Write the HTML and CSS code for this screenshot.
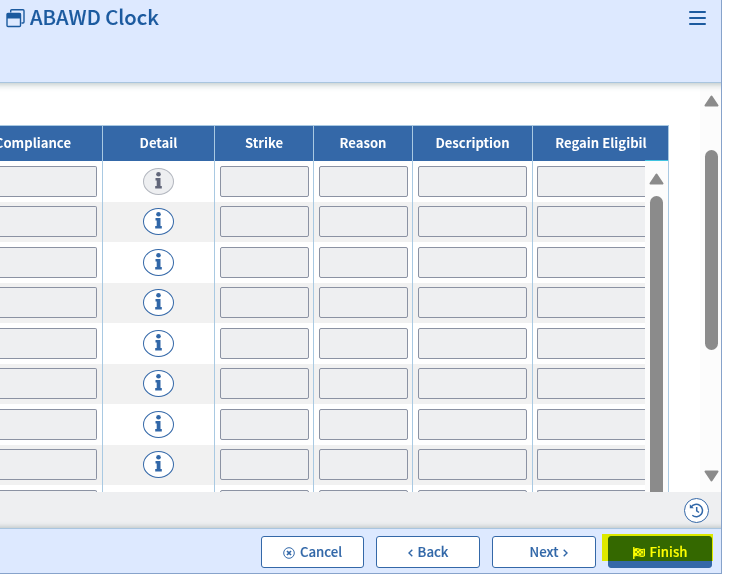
FILE: index.html
```html
<!DOCTYPE html>
<html lang="en">
<head>
    <meta charset="UTF-8">
    <meta name="viewport" content="width=device-width, initial-scale=1.0">
    <title>ABAWD Clock</title>
    <link rel="stylesheet" href="styles.css">
</head>
<body>
    <div class="window">
        <header class="page-header">
            <svg class="title-icon" width="19" height="19" viewBox="0 0 19 19">
                <path d="M4.700 3.500V1.700q0-1 1-1H17q1 0 1 1V13q0 1-1 1h-1.500" fill="none" stroke="#1b5a9f" stroke-width="1.400"/>
                <rect x="1" y="4.500" width="13.500" height="13" rx="1" fill="none" stroke="#1b5a9f" stroke-width="1.400"/>
                <path d="M1 4h13.500v5.500H1z" fill="#1b5a9f"/>
            </svg>
            <h1>ABAWD Clock</h1>
            <button class="menu-button" aria-label="Menu"><span></span><span></span><span></span></button>
        </header>

        <main class="content">
            <div class="table">
                <div class="row head">
                    <div class="cell first">Compliance</div>
                    <div class="cell">Detail</div>
                    <div class="cell">Strike</div>
                    <div class="cell">Reason</div>
                    <div class="cell">Description</div>
                    <div class="cell last">Regain Eligibil</div>
                </div>
                <div class="table-body">
                    <div class="rows" id="rows"></div>
                    <div class="scrollbar inner">
                        <svg class="arrow" width="15" height="12" viewBox="0 0 15 12"><path d="M7.500 1.500L13.500 10.500H1.500z"/></svg>
                        <div class="thumb"></div>
                    </div>
                </div>
            </div>
            <div class="scrollbar outer">
                <svg class="arrow" width="15" height="12" viewBox="0 0 15 12"><path d="M7.500 1.500L13.500 10.500H1.500z"/></svg>
                <div class="thumb"></div>
                <svg class="arrow down" width="15" height="12" viewBox="0 0 15 12"><path d="M1.500 1.500H13.500L7.500 10.500z"/></svg>
            </div>
        </main>

        <div class="status-bar">
            <button class="history" aria-label="History">
                <svg width="15" height="15" viewBox="0 0 15 15" fill="none" stroke="#3167a8" stroke-width="1.500">
                    <path d="M2 4.300A6.200 6.200 0 1 1 3.300 12.300"/>
                    <path d="M.8 1.200v4h4z" fill="#3167a8" stroke="none"/>
                    <path d="M7.700 4v3.800l2.300 1.700"/>
                </svg>
            </button>
        </div>

        <footer class="actions">
            <button class="btn cancel">
                <svg width="12" height="12" viewBox="0 0 12 12" fill="none" stroke="#3167a8"><circle cx="6" cy="6" r="5.300"/><path d="M4 4l4 4M8 4l-4 4" stroke-width="1.700"/></svg>
                <span>Cancel</span>
            </button>
            <button class="btn">
                <svg width="5" height="8" viewBox="0 0 5 8" fill="none" stroke="#3167a8" stroke-width="1.400"><path d="M4.300.8L1 4l3.300 3.200"/></svg>
                <span>Back</span>
            </button>
            <button class="btn next">
                <span>Next</span>
                <svg width="5" height="8" viewBox="0 0 5 8" fill="none" stroke="#3167a8" stroke-width="1.400"><path d="M.7.8L4 4 .7 7.200"/></svg>
            </button>
            <div class="finish-wrap">
                <button class="btn primary">
                    <svg width="12" height="12" viewBox="0 0 12 12">
                        <path d="M.8 0v12" stroke="#fff" stroke-width="1.400"/>
                        <path d="M1.500 2q2.500-1 5 .1t5-.1v7q-2.500 1-5 0t-5 0z" fill="#fff" fill-opacity=".45" stroke="#fff"/>
                        <path d="M2 2h2v2H2zM6 2.500h2v2H6zM4 4h2v2H4zM8 4.300h2v2H8zM2 6h2v2H2zM6 6.300h2v2H6z" fill="#fff"/>
                    </svg>
                    <span>Finish</span>
                </button>
                <div class="highlight"></div>
            </div>
        </footer>
    </div>
    <script src="rows.js"></script>
</body>
</html>
```
FILE: rows.js
```js
// Builds the rows of disabled fields, only the first detail button is disabled
var rows = document.getElementById("rows");
var icon = '<svg width="7" height="17" viewBox="0 0 7 17"><circle cx="3.500" cy="2.300" r="2.300"/><path d="M.5 6h5v8h1.300v2.500H.2V14h1.500V8.500H.5z"/></svg>';

for (var i = 0; i < 9; i++) {
    var row = document.createElement("div");
    row.className = "row";
    var disabled = i === 0 ? " disabled" : "";
    row.innerHTML =
        '<div class="cell first"><div class="field"></div></div>' +
        '<div class="cell detail"><button class="info" aria-label="Detail"' + disabled + '>' + icon + '</button></div>' +
        '<div class="cell"><div class="field"></div></div>' +
        '<div class="cell"><div class="field"></div></div>' +
        '<div class="cell wide"><div class="field"></div></div>' +
        '<div class="cell last"><div class="field"></div></div>';
    rows.appendChild(row);
}
```
FILE: styles.css
```css
* {
    box-sizing: border-box;
}
body {
    margin: 0;
    background: #fff;
    overflow: hidden;
    font-family: "Noto Sans CJK SC", "Open Sans", sans-serif;
    color: #1b5a9f;
}
button {
    font-family: inherit;
    padding: 0;
}
.window {
    width: 722px;
    height: 574px;
    display: flex;
    flex-direction: column;
    overflow: hidden;
    border-right: 1px solid #87a3cb;
    border-bottom: 1px solid #87a3cb;
}

/* Header */
.page-header {
    height: 83px;
    flex: none;
    display: flex;
    align-items: flex-start;
    margin: 0 -10px;
    padding: 9px 25px 0 16px;
    background: #dde9ff;
    border-bottom: 1px solid #a9c5df;
    box-shadow: 0 1px 7px rgba(60, 90, 90, 0.4);
    z-index: 1;
}
.title-icon {
    flex: none;
}
h1 {
    margin: -2px 0 0 5px;
    font-size: 20.2px;
    line-height: 20px;
    font-weight: 500;
    -webkit-text-stroke: 0.15px #1b5a9f;
    white-space: nowrap;
}
.menu-button {
    margin: 2px 0 0 auto;
    width: 17px;
    height: 14px;
    border: none;
    background: none;
    display: flex;
    flex-direction: column;
    justify-content: space-between;
}
.menu-button span {
    height: 2px;
    background: #1b5a9f;
    border-radius: 1px;
}

/* Table */
.content {
    height: 409px;
    flex: none;
    display: flex;
    justify-content: space-between;
    overflow: hidden;
}
.table {
    width: 669px;
    margin-top: 42px;
    border-top: 1px solid #a9c9e2;
    border-right: 1px solid #a9c9e2;
}
.row {
    display: grid;
    grid-template-columns: 103px 112px 99px 99px 120px 135px;
    height: 40.5px;
    background: #fff;
}
.row:nth-child(even) {
    background: #f1f1f1;
}
.cell {
    border-right: 1px solid #a9c9e2;
    padding: 4.5px 4px 0 5px;
    text-align: center;
}
.cell.first {
    padding-left: 0;
    padding-right: 5px;
}
.cell.detail {
    padding-right: 5px;
}
.cell.wide {
    padding-right: 5px;
}
.cell.last {
    border-right: none;
    padding-left: 4px;
    padding-right: 0;
}
.row.head {
    height: 35.4px;
    background: #3468a8;
    color: #fff;
    font-size: 13.1px;
    font-weight: 700;
    line-height: 34px;
    white-space: nowrap;
}
.head .cell {
    padding: 0;
}
.head .cell.first {
    padding-right: 31px;
    display: flex;
    justify-content: flex-end;
}
.head .cell.last {
    padding-left: 1px;
}
.field {
    height: 31px;
    background: #eeeff1;
    border: 1px solid #8b92a3;
    border-radius: 2px;
}
.first .field {
    border-left: none;
    border-radius: 0 2px 2px 0;
}
.last .field {
    border-right: none;
    border-radius: 2px 0 0 2px;
}
.table-body {
    display: flex;
    height: 332px;
}
.rows {
    width: 645px;
    overflow: hidden;
}
.info {
    width: 31px;
    height: 27px;
    margin-top: 2px;
    border: 1px solid #3468a8;
    border-radius: 50%;
    background: #fff;
    display: inline-flex;
    justify-content: center;
    padding-top: 3px;
    vertical-align: top;
}
.info svg {
    fill: #3167a8;
}
.info:disabled {
    background: #eeeff1;
    border-color: #b3b7bf;
}
.info:disabled svg {
    fill: #62677a;
}

/* Scrollbars */
.scrollbar {
    display: flex;
    flex-direction: column;
    align-items: center;
    background: #fcfcfc;
}
.thumb {
    background: #8b8b8b;
    border-radius: 7px;
    width: 13px;
}
.arrow {
    flex: none;
    fill: #8b8b8b;
    stroke: #8b8b8b;
    stroke-width: 2;
    stroke-linejoin: round;
}
.inner {
    width: 23px;
    padding-top: 12px;
    border-top: 1px solid #3fc3e0;
    margin-top: -1px;
}
.inner .thumb {
    height: 330px;
    flex: none;
    margin-top: 11px;
}
.outer {
    width: 21px;
    padding: 12px 0 10px 1px;
}
.outer .thumb {
    height: 200px;
    margin-top: 43px;
}
.outer .down {
    margin-top: auto;
}

/* Bottom bars */
.status-bar {
    flex: 1;
    display: flex;
    justify-content: flex-end;
    padding: 6px 12px 0 0;
    background: #eeeff1;
}
.history {
    width: 25px;
    height: 25px;
    display: flex;
    align-items: center;
    justify-content: center;
    border: 1px solid #3468a8;
    border-radius: 50%;
    background: #fff;
}
.actions {
    height: 45px;
    display: flex;
    justify-content: flex-end;
    gap: 12px;
    margin: 0 -10px;
    padding: 7px 19px 0 0;
    background: #dde9ff;
    border-top: 1px solid #a9c5df;
    box-shadow: 0 -1px 5px rgba(60, 90, 90, 0.3);
}
.btn {
    width: 104px;
    height: 32px;
    display: flex;
    align-items: center;
    justify-content: center;
    gap: 5px;
    border: 1px solid #3468a8;
    border-radius: 3px;
    background: #fff;
    color: #3167a8;
    font-size: 13.2px;
    font-weight: 500;
    -webkit-text-stroke: 0.15px currentColor;
}
.btn span {
    line-height: 20px;
}
.btn svg {
    margin-top: 1px;
}
.cancel {
    width: 103px;
}
.next {
    padding-left: 10px;
}
.primary {
    background: #3468a8;
    color: #fff;
}
.finish-wrap {
    position: relative;
}
.highlight {
    position: absolute;
    left: -6px;
    top: -2px;
    width: 111px;
    height: 27px;
    background: #ffff00;
    mix-blend-mode: multiply;
}
```
